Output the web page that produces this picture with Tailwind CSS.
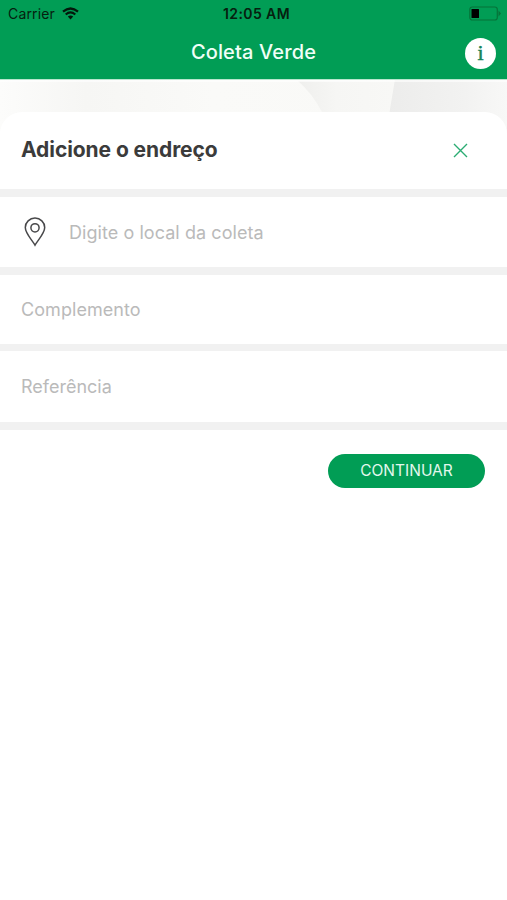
<!DOCTYPE html>
<html lang="pt-BR">
<head>
<meta charset="utf-8">
<title>Coleta Verde</title>
<script src="https://cdn.jsdelivr.net/npm/@tailwindcss/browser@4"></script>
</head>
<body class="bg-white font-['Inter','Liberation_Sans',sans-serif]">
<div class="flex h-[900px] w-[507px] flex-col overflow-hidden bg-white">
  <header class="h-[79px] shrink-0 bg-[#019d55]">
    <div class="grid h-[27px] grid-cols-3 items-center pl-2 pr-[6px] text-[14px] leading-[27px] text-[#06200f]">
      <div class="flex items-center gap-[7px]">
        <span class="tracking-[0.15px]">Carrier</span>
        <svg class="-mt-px h-[13px] w-[17px]" viewBox="0 0 17 13" fill="none" stroke="#03180b" stroke-width="2.2"><path d="M1 4.7Q8.500-1.700 16 4.700M3.700 7.500Q8.500 3.400 13.300 7.500"/><path d="M5.800 9.500Q8.500 7.300 11.200 9.500L8.500 12.400Z" fill="#03180b" stroke="none"/></svg>
      </div>
      <span class="whitespace-nowrap pl-[4px] text-center font-semibold tracking-[0.42px]">12:05 AM</span>
      <svg class="h-[15px] w-[32px] justify-self-end" viewBox="0 0 32 15" fill="none"><rect x=".8" y="1" width="27.500" height="13" rx="2.500" stroke="#067339" stroke-width="1.200"/><rect x="2.500" y="3" width="7.500" height="9" rx=".5" fill="#000"/><path d="M29.500 4.500L32 7.500L29.500 10.500Z" fill="#067339"/></svg>
    </div>
    <div class="grid h-[52px] grid-cols-[1fr_auto_1fr] items-center pr-[11px] pl-[11px]">
      <h1 class="col-start-2 -mt-[2px] text-[20px] font-medium leading-none tracking-[0.15px] text-[#f0fff7]">Coleta Verde</h1>
      <div class="flex size-[31px] items-center justify-center justify-self-end rounded-full bg-white pb-px font-['Liberation_Serif',serif] text-[22px] leading-none text-[#138458] [-webkit-text-stroke:0.5px_#138458]">i</div>
    </div>
  </header>
  <main class="relative flex-1">
    <svg class="absolute left-0 top-0 h-[60px] w-[507px]" viewBox="0 0 507 60">
      <defs>
        <linearGradient id="wall"><stop stop-color="#fcfcfb"/><stop offset=".17" stop-color="#f6f6f4"/><stop offset=".42" stop-color="#fafaf8"/><stop offset="1" stop-color="#f8f8f6"/></linearGradient>
        <linearGradient id="panel"><stop stop-color="#ececeb"/><stop offset=".65" stop-color="#f2f2f1"/><stop offset="1" stop-color="#f8f8f7"/></linearGradient>
        <linearGradient id="fold"><stop stop-color="#efefed"/><stop offset=".4" stop-color="#f6f6f4"/><stop offset="1" stop-color="#f8f8f6"/></linearGradient>
      </defs>
      <path fill="url(#wall)" d="M0 0H507V60H0z"/>
      <path fill="url(#fold)" d="M298 2H394L389 33H322Q312 14 298 2"/>
      <path fill="url(#panel)" d="M395 0H507V60H385z"/>
      <path fill="#b9e6ce" d="M0 0H507V1H0z"/>
      <path fill="#fff" d="M0 1H507V3H0z" opacity=".6"/>
    </svg>
    <section class="relative mt-[33px] rounded-t-[22px] bg-white">
      <div class="flex h-[77px] items-center justify-between pl-[21px] pr-[39px]">
        <h2 class="-mt-[2px] text-[21px] font-bold leading-none tracking-[-0.08px] text-[#3b3b3b]">Adicione o endreço</h2>
        <svg class="size-[15px]" viewBox="0 0 15 15" fill="none" stroke="#2bac73" stroke-width="1.400"><path d="M1 1L14 14M14 1L1 14"/></svg>
      </div>
      <div class="flex h-[86px] items-center border-y-8 border-[#f1f1f1] pl-[24px]">
        <svg class="h-[30px] w-[22px]" viewBox="0 0 22 30" fill="none" stroke="#48484a" stroke-width="1.500"><path d="M11 28.200C8.500 23.500 1.300 16.500 1.300 10.500A9.700 9.400 0 0 1 20.700 10.500C20.700 16.500 13.500 23.500 11 28.200Z"/><circle cx="11" cy="10.800" r="4.100"/></svg>
        <span class="ml-[23px] pt-[2px] text-[18px] leading-none tracking-[0.06px] text-[#bababa]">Digite o local da coleta</span>
      </div>
      <div class="flex h-[76px] items-center border-b-[7px] border-[#f1f1f1] pl-[21px] text-[18px] leading-none tracking-[0.06px] text-[#bababa]">Complemento</div>
      <div class="flex h-[79px] items-center border-b-8 border-[#f1f1f1] pl-[21px] text-[18px] leading-none text-[#bababa]">Referência</div>
      <div class="flex justify-end pr-[22px] pt-6">
        <button class="h-[34px] w-[157px] rounded-full bg-[#019d55] pb-px text-[15.5px] leading-none text-[#e3f8ed]">CONTINUAR</button>
      </div>
    </section>
  </main>
</div>
</body>
</html>
